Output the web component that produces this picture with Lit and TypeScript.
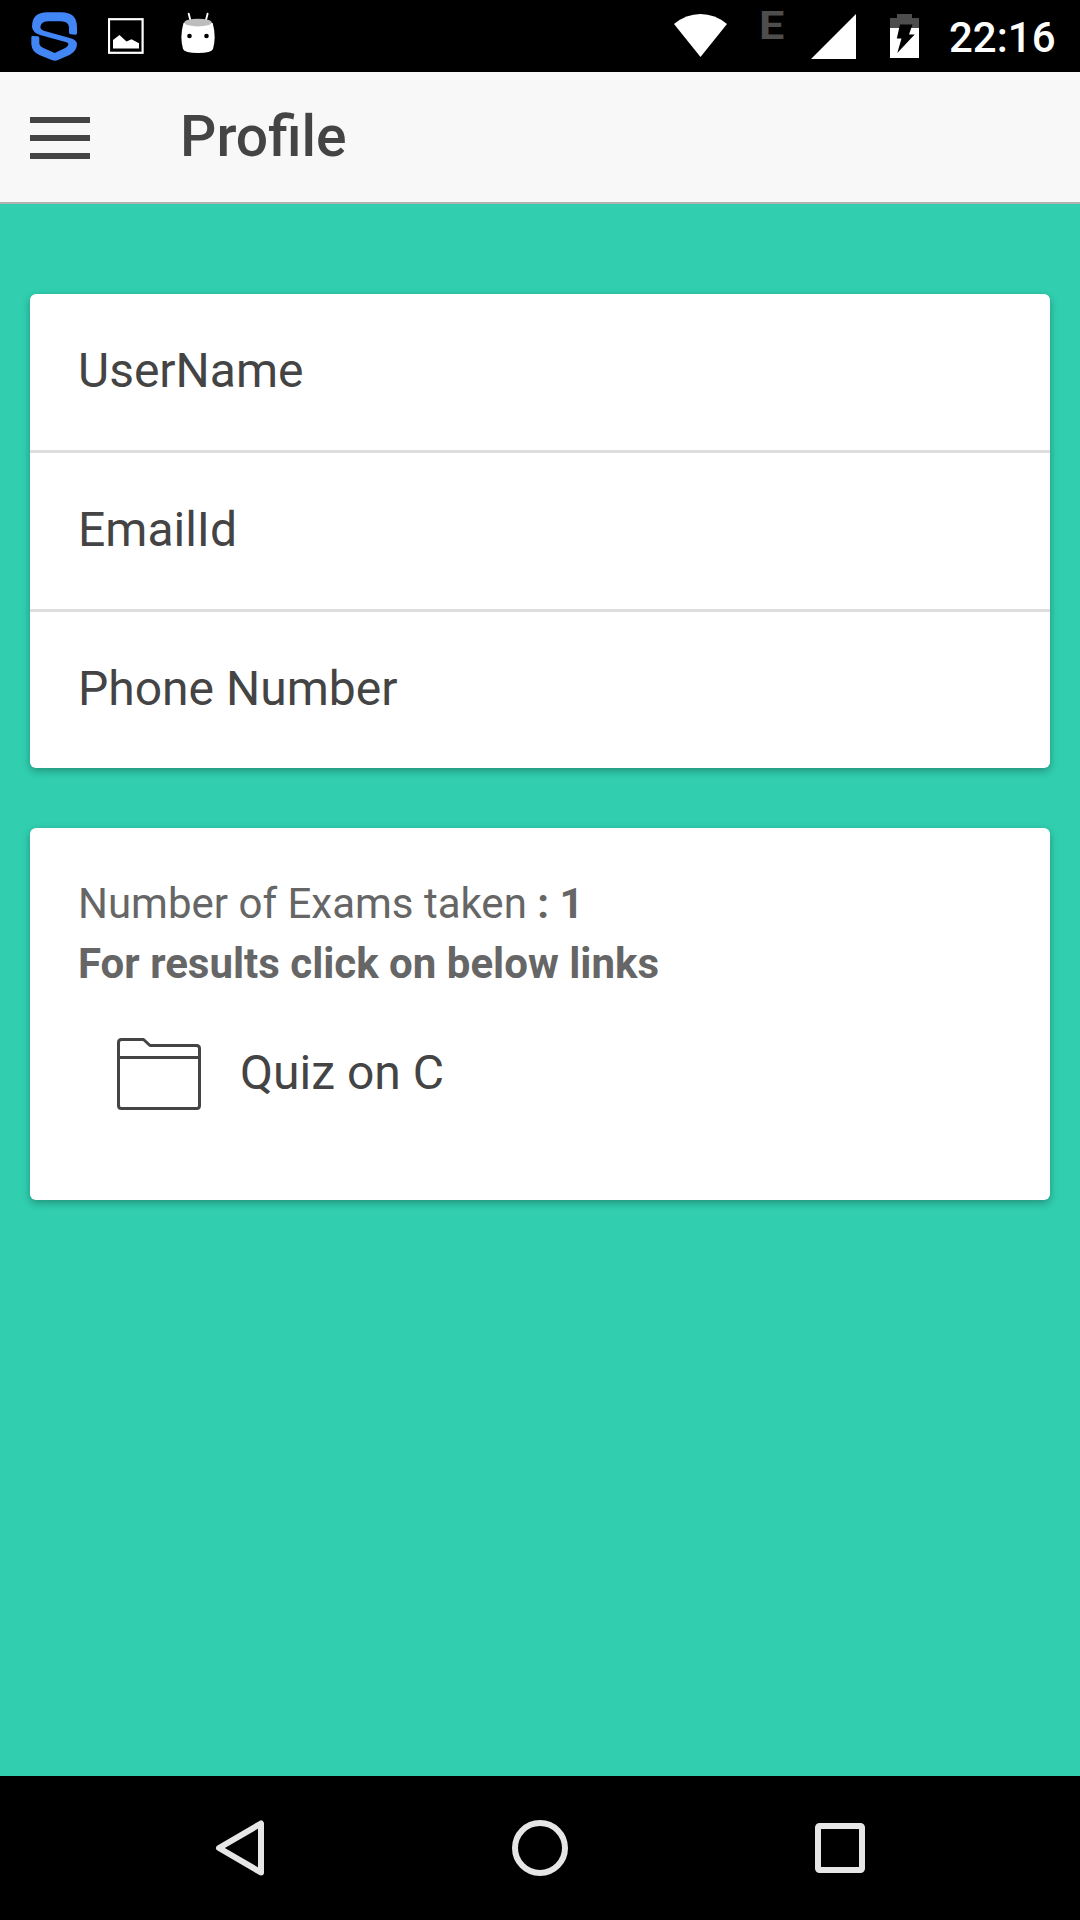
import { LitElement, html, css } from "lit";
import { customElement, property } from "lit/decorators.js";

@customElement("status-bar")
class StatusBar extends LitElement {
  static styles = css`
    :host {
      display: flex;
      justify-content: space-between;
      height: 72px;
      background: #000;
      color: #fff;
    }
    .group {
      display: flex;
      align-items: flex-start;
    }
    .left {
      padding-left: 30px;
      gap: 28px;
    }
    svg {
      display: block;
      height: 72px;
      flex: none;
    }
    .android {
      margin-left: 8px;
    }
    .network {
      width: 22px;
      margin: 0 30px 0 31px;
      font-size: 39.5px;
      font-weight: 700;
      line-height: 51px;
      color: #4d4d4d;
      transform: scaleX(1.14);
      transform-origin: left;
    }
    .battery {
      margin-left: 34px;
    }
    .clock {
      width: 131px;
      margin-left: 30px;
      font-size: 42px;
      font-weight: 500;
      line-height: 75px;
    }
  `;

  @property() time = "";

  render() {
    return html`
      <div class="group left">
        <svg width="50" viewBox="30 0 50 72">
          <path
            transform="translate(24 6) scale(0.3333)"
            fill="#4285f4"
            d="M159 82Q159 86 155 86L140 85Q135 84 135 80V64Q134 46 110 46H75Q52 46 49 62Q49 71 62 75L140 97Q159 103 159 114Q159 134 138 146L102 162Q93 166 83 162L46 147Q24 138 22 115V94Q22 90 26 90L41 91Q46 92 46 96V112Q47 122 60 127L92 141L122 127Q134 119 133 113Q132 109 122 107L48 87Q25 79 24 62Q24 19 70 19H112Q158 19 159 62z"
          />
        </svg>
        <svg width="36" viewBox="108 0 36 72">
          <rect x="109" y="19.200" width="33.600" height="33.600" fill="none" stroke="#fff" stroke-width="2.200" />
          <path fill="#fff" d="M113 48.500V40l6.500-5 7 6.500 5-2.200 7.500 4v5.200z" />
        </svg>
        <svg class="android" width="36" viewBox="180 0 36 72">
          <path d="M188.700 13.700l2.100 8M207.600 13.700l-2.100 8" stroke="#fff" stroke-width="1.900" stroke-linecap="round" />
          <path fill="#fff" d="M183.500 23Q198 18 212.700 23Q216.500 37 213 49Q211.500 53 198 53Q184.500 53 183 49Q179.500 37 183.500 23z" />
          <ellipse cx="198" cy="22.600" rx="13.700" ry="3.900" fill="#bdbdbd" />
          <circle cx="189.500" cy="36" r="2.300" fill="#000" />
          <circle cx="206.500" cy="36" r="2.300" fill="#000" />
        </svg>
      </div>
      <div class="group">
        <svg width="54" viewBox="674 0 54 72">
          <path fill="#fff" d="M674 24Q686 14 700.500 14T727 24L700.500 57z" />
        </svg>
        <span class="network">E</span>
        <svg width="45" viewBox="811 0 45 72">
          <path fill="#fff" d="M811 59L856 14V59z" />
        </svg>
        <svg class="battery" width="29" viewBox="890 0 29 72">
          <path fill="#4d4d4d" d="M897 14h15v4h7v10h-29V18h7z" />
          <path fill="#fff" d="M890 28h29v30h-29z" />
          <path fill="#000" d="M900 24.500h12.500l-3.500 10h5.700L897.300 53l4.200-14.500h-4.700z" />
        </svg>
        <span class="clock">${this.time}</span>
      </div>
    `;
  }
}

@customElement("nav-header")
class NavHeader extends LitElement {
  static styles = css`
    :host {
      display: flex;
      align-items: flex-start;
      box-sizing: border-box;
      height: 132px;
      padding-left: 30px;
      background: #f8f8f8;
      border-bottom: 2px solid #b2b2b2;
      color: #444;
    }
    .menu {
      display: flex;
      flex-direction: column;
      gap: 12px;
      width: 60px;
      padding-top: 45px;
    }
    .line {
      height: 6px;
      background: #444;
    }
    .title {
      margin: 0 0 0 90px;
      font-size: 57px;
      font-weight: 500;
      line-height: 129px;
    }
  `;

  @property() heading = "";

  render() {
    return html`
      <div class="menu">
        <div class="line"></div>
        <div class="line"></div>
        <div class="line"></div>
      </div>
      <h1 class="title">${this.heading}</h1>
    `;
  }
}

@customElement("system-nav")
class SystemNav extends LitElement {
  static styles = css`
    :host {
      display: flex;
      justify-content: center;
      align-items: center;
      gap: 240px;
      height: 144px;
      background: #000;
    }
    svg {
      display: block;
    }
  `;

  render() {
    return html`
      <svg width="60" height="60" viewBox="0 0 60 60" fill="none" stroke="#e6e6e6" stroke-width="6" stroke-linejoin="round">
        <path d="M51 5.500V54.500L9 30z" />
      </svg>
      <svg width="60" height="60" viewBox="0 0 60 60" fill="none" stroke="#e6e6e6" stroke-width="6">
        <circle cx="30" cy="30" r="25" />
      </svg>
      <svg width="60" height="60" viewBox="0 0 60 60" fill="none" stroke="#e6e6e6" stroke-width="6">
        <rect x="8" y="8" width="44" height="44" rx="1.500" />
      </svg>
    `;
  }
}

@customElement("app-root")
class AppRoot extends LitElement {
  static styles = css`
    :host {
      display: flex;
      flex-direction: column;
      height: 1920px;
      overflow: hidden;
      background: #31cfb0;
      font-family: Roboto, sans-serif;
      color: #444;
    }
    .content {
      flex: 1;
      display: flex;
      flex-direction: column;
      gap: 60px;
      padding: 90px 30px 0;
    }
    .card {
      background: #fff;
      border-radius: 6px;
      box-shadow: 0 3px 9px rgba(0, 0, 0, 0.3);
    }
    .item {
      padding: 49px 48px 51px;
      font-size: 48px;
      line-height: 56px;
    }
    .item + .item {
      border-top: 3px solid #ddd;
    }
    .results {
      box-sizing: border-box;
      height: 372px;
      padding: 46px 48px 0;
    }
    .summary {
      margin: 0;
      font-size: 42px;
      line-height: 60px;
      color: #666;
    }
    .quiz {
      display: flex;
      align-items: flex-start;
      gap: 39px;
      padding: 37px 0 0 39px;
      font-size: 48px;
      line-height: 84px;
    }
    .folder {
      display: block;
      margin-top: 7px;
    }
  `;

  private fields = ["UserName", "EmailId", "Phone Number"];

  render() {
    return html`
      <status-bar time="22:16"></status-bar>
      <nav-header heading="Profile"></nav-header>
      <main class="content">
        <section class="card">
          ${this.fields.map((label) => html`<div class="item">${label}</div>`)}
        </section>
        <section class="card results">
          <p class="summary">Number of Exams taken <b>: 1</b></p>
          <p class="summary"><b>For results click on below links</b></p>
          <div class="quiz">
            <svg class="folder" width="84" height="72" viewBox="0 0 84 72" fill="none" stroke="#444" stroke-width="3" stroke-linejoin="round">
              <path d="M1.500 4.500Q1.500 1.500 4.500 1.500H26.500L33 7.500H79.500Q82.500 7.500 82.500 10.500V67.500Q82.500 70.500 79.500 70.500H4.500Q1.500 70.500 1.500 67.500zM1.500 19.500H82.500" />
            </svg>
            <span>Quiz on C</span>
          </div>
        </section>
      </main>
      <system-nav></system-nav>
    `;
  }
}
